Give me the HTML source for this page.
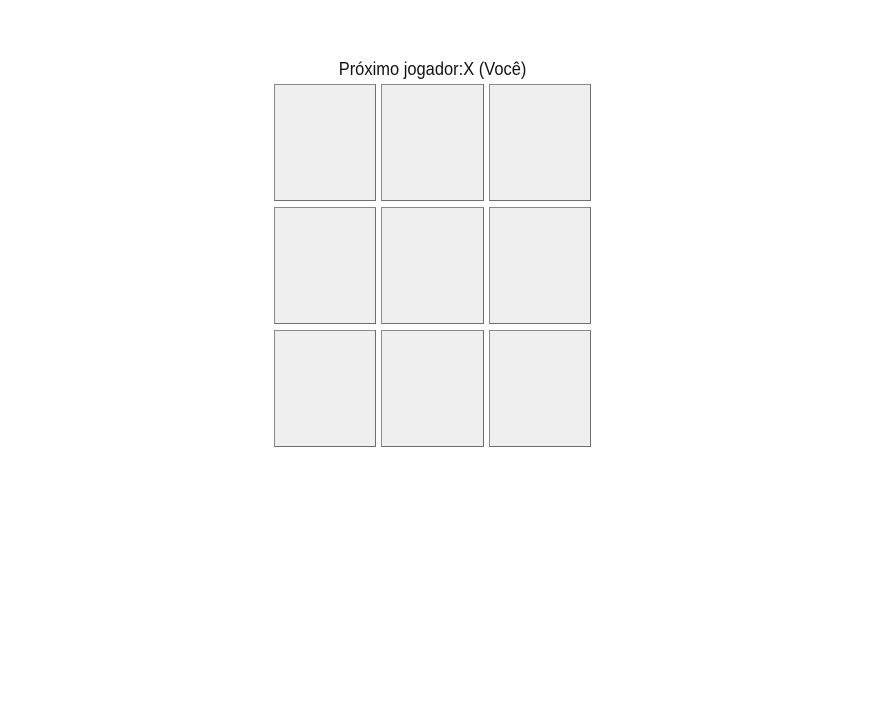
<!DOCTYPE html>
<html><head><style>
html,body{margin:0;background:#fff;width:889px;height:719px;overflow:hidden}
.t{position:absolute;left:274px;width:317px;top:59px;text-align:center;font:18px "Liberation Sans",sans-serif;color:#111;white-space:nowrap}
.t span{display:inline-block;transform:scaleX(0.915);transform-origin:center}
.c{position:absolute;width:100px;height:115px;background:#efefef;border:1px solid #6e6e6e;border-top-color:#8a8a8a;border-left-color:#8a8a8a;box-sizing:content-box}
</style></head><body>
<div class="t"><span>Próximo jogador:X (Você)</span></div>
<div class="c" style="left:274px;top:84px"></div>
<div class="c" style="left:381px;top:84px;width:101px"></div>
<div class="c" style="left:489px;top:84px"></div>
<div class="c" style="left:274px;top:207px"></div>
<div class="c" style="left:381px;top:207px;width:101px"></div>
<div class="c" style="left:489px;top:207px"></div>
<div class="c" style="left:274px;top:330px"></div>
<div class="c" style="left:381px;top:330px;width:101px"></div>
<div class="c" style="left:489px;top:330px"></div>
</body></html>
